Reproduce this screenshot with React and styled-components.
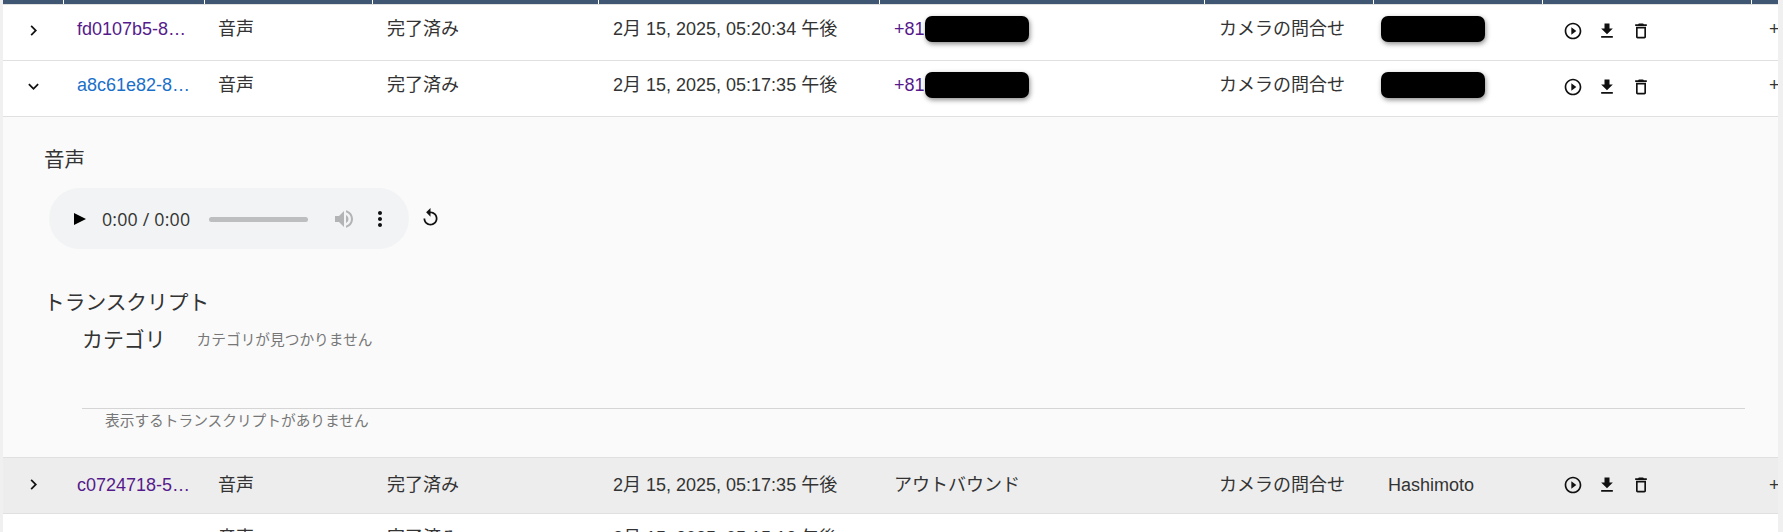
import React from "react";
import styled, { createGlobalStyle } from "styled-components";

const Global = createGlobalStyle`
  html, body { margin: 0; padding: 0; height: 532px; overflow: hidden; background: #f0f0f0; }
  #root { height: 532px; }
`;

const COLS = "61px 141px 168px 226px 281px 325px 169px 169px 209px 26px";
const FONT = `"Liberation Sans", "Noto Sans CJK JP", sans-serif`;

const Page = styled.div`
  height: 532px;
  overflow: hidden;
  padding: 0 5px 0 3px;
  font-family: ${FONT};
  color: #333;
`;
const Sheet = styled.div`
  background: #fff;
  overflow: hidden;
  height: 532px;
`;
const HeaderBar = styled.div`
  display: grid;
  grid-template-columns: ${COLS};
  height: 4px;
  background: #3f5773;
  border-bottom: 1px solid #e0e0e0;
`;
const HeaderCell = styled.div`
  border-right: 1px solid #fff;
  &:last-child { border-right: 0; }
`;
const Row = styled.div`
  display: grid;
  grid-template-columns: ${COLS};
  box-sizing: border-box;
  height: 56px;
  padding-top: ${(p) => (p.$hover ? "2px" : "0")};
  border-bottom: 1px solid #e0e0e0;
  background: ${(p) => (p.$hover ? "#ededed" : "#fff")};
`;
const Cell = styled.div`
  display: flex;
  align-items: flex-start;
  padding: ${(p) => (p.$hover ? "14px" : "13px")} 0 0 ${(p) => p.$inset || 14}px;
  font-size: 18px;
  line-height: 23px;
  white-space: nowrap;
  overflow: hidden;
  min-width: 0;
`;
const ArrowCell = styled.div`
  display: flex;
  align-items: center;
  justify-content: center;
  padding-bottom: 4px;
  padding-right: 1px;
  color: #111;
`;
const IdLink = styled.span`
  color: ${(p) => (p.$active ? "#1a6fc9" : "#551a8b")};
`;
const PhonePrefix = styled.span`
  color: #551a8b;
`;
const Redact = styled.span`
  display: block;
  width: 104px;
  height: 26px;
  margin-top: -2px;
  background: #000;
  border-radius: 7px;
  box-shadow: 1px 2px 5px rgba(0, 0, 0, 0.45);
  flex: none;
`;
const PhoneRedact = styled(Redact)`
  margin-left: 0;
`;
const AgentRedact = styled(Redact)`
  margin-left: -7px;
`;
const ActionCell = styled.div`
  display: flex;
  align-items: center;
  gap: 14px;
  padding: 0 0 4px 20px;
  color: #111;
`;
const Icon = styled.svg`
  width: ${(p) => p.$size || 20}px;
  height: ${(p) => p.$size || 20}px;
  fill: currentColor;
  flex: none;
  display: block;
`;

const Panel = styled.div`
  box-sizing: border-box;
  height: 341px;
  background: #fafafa;
  border-bottom: 1px solid #e0e0e0;
  padding: 29px 33px 0 41px;
`;
const Heading = styled.div`
  font-size: 20.5px;
  line-height: 28px;
  color: #333;
`;
const PlayerRow = styled.div`
  display: flex;
  align-items: center;
  gap: 14px;
  margin: 14px 0 0 5px;
`;
const Player = styled.div`
  box-sizing: border-box;
  width: 360px;
  height: 61px;
  border-radius: 31px;
  background: #f1f3f4;
  display: flex;
  align-items: center;
  padding: 0 0 0 25px;
`;
const PlayGlyph = styled.span`
  width: 0;
  height: 0;
  border-style: solid;
  border-width: 6.5px 0 6.5px 12px;
  border-color: transparent transparent transparent #000;
  margin-top: 1px;
`;
const Time = styled.span`
  font-family: "Open Sans", sans-serif;
  font-size: 17.8px;
  letter-spacing: 0.2px;
  color: #333;
  margin-left: 16px;
  width: 107px;
  white-space: nowrap;
`;
const Track = styled.span`
  width: 99px;
  height: 5px;
  border-radius: 3px;
  background: #bdbebf;
  margin-top: 1px;
`;
const Speaker = styled(Icon)`
  color: #b3b4b5;
  margin-left: 24px;
`;
const Dots = styled(Icon)`
  color: #111;
  margin-left: 12px;
`;
const ReplayBtn = styled.span`
  color: #111;
  margin-top: -3px;
  margin-left: -3px;
`;
const TranscriptHeading = styled(Heading)`
  font-size: 20.7px;
  margin-top: 40px;
`;
const CategoryRow = styled.div`
  display: flex;
  align-items: center;
  gap: 31px;
  margin: 8px 0 0 38px;
`;
const CategoryTitle = styled.div`
  font-size: 20.9px;
  line-height: 30px;
  color: #333;
`;
const Muted = styled.div`
  font-size: 14.7px;
  line-height: 20px;
  color: #777;
`;
const Divider = styled.div`
  height: 1px;
  background: #d5d5d5;
  margin: 53px 0 0 38px;
`;
const EmptyNote = styled(Muted)`
  margin: 2px 0 0 61px;
`;

const P = {
  right: "M8.59 16.59 13.17 12 8.59 7.41 10 6l6 6-6 6z",
  down: "M7.41 8.59 12 13.17l4.59-4.58L18 10l-6 6-6-6z",
  play: "M10 16.5l6-4.5-6-4.5v9zM12 2C6.48 2 2 6.48 2 12s4.48 10 10 10 10-4.48 10-10S17.52 2 12 2zm0 18c-4.41 0-8-3.59-8-8s3.59-8 8-8 8 3.59 8 8-3.59 8-8 8z",
  download: "M19 9h-4V3H9v6H5l7 7 7-7zM5 18v2h14v-2H5z",
  trash: "M6 19c0 1.1.9 2 2 2h8c1.1 0 2-.9 2-2V7H6v12zM8 9h8v10H8V9zm7.5-5l-1-1h-5l-1 1H5v2h14V4z",
  replay: "M12 5V1L7 6l5 5V7c3.31 0 6 2.69 6 6s-2.69 6-6 6-6-2.69-6-6H4c0 4.42 3.58 8 8 8s8-3.58 8-8-3.58-8-8-8z",
  speaker: "M3 9v6h4l5 5V4L7 9H3zm13.5 3c0-1.77-1.02-3.29-2.5-4.03v8.05c1.48-.73 2.5-2.25 2.5-4.02zM14 3.23v2.06c2.89.86 5 3.54 5 6.71s-2.11 5.85-5 6.71v2.06c4.01-.91 7-4.49 7-8.77s-2.99-7.86-7-8.77z",
  dots: "M12 8c1.1 0 2-.9 2-2s-.9-2-2-2-2 .9-2 2 .9 2 2 2zm0 2c-1.1 0-2 .9-2 2s.9 2 2 2 2-.9 2-2-.9-2-2-2zm0 6c-1.1 0-2 .9-2 2s.9 2 2 2 2-.9 2-2-.9-2-2-2z",
};

const Glyph = ({ d, size, as: Comp = Icon }) => (
  <Comp viewBox="0 0 24 24" $size={size} aria-hidden="true">
    <path d={d} />
  </Comp>
);

const rows = [
  { id: "fd0107b5-8…", date: "2月 15, 2025, 05:20:34 午後", redacted: true },
  { id: "a8c61e82-8…", date: "2月 15, 2025, 05:17:35 午後", redacted: true, open: true },
  { id: "c0724718-5…", date: "2月 15, 2025, 05:17:35 午後", hover: true },
  { id: "", date: "2月 15, 2025, 05:15:12 午後", plain: true },
];

const TableRow = ({ r }) => (
  <Row $hover={r.hover}>
    <ArrowCell>{!r.plain && <Glyph d={r.open ? P.down : P.right} size={21} />}</ArrowCell>
    <Cell $hover={r.hover} $inset={13}>
      <IdLink $active={r.open}>{r.id}</IdLink>
    </Cell>
    <Cell $hover={r.hover} $inset={13}>音声</Cell>
    <Cell $hover={r.hover}>完了済み</Cell>
    <Cell $hover={r.hover}>{r.date}</Cell>
    <Cell $hover={r.hover}>
      {r.redacted ? (
        <>
          <PhonePrefix>+81</PhonePrefix>
          <PhoneRedact />
        </>
      ) : (
        !r.plain && "アウトバウンド"
      )}
    </Cell>
    <Cell $hover={r.hover}>{!r.plain && "カメラの問合せ"}</Cell>
    <Cell $hover={r.hover}>{r.redacted ? <AgentRedact /> : !r.plain && "Hashimoto"}</Cell>
    {r.plain ? (
      <Cell />
    ) : (
      <ActionCell>
        <Glyph d={P.play} />
        <Glyph d={P.download} />
        <Glyph d={P.trash} />
      </ActionCell>
    )}
    <Cell $hover={r.hover} $inset={17}>{!r.plain && "+"}</Cell>
  </Row>
);

export default function App() {
  return (
    <>
      <Global />
      <Page>
        <Sheet>
          <HeaderBar>
            {Array.from({ length: 10 }, (_, i) => (
              <HeaderCell key={i} />
            ))}
          </HeaderBar>
          <TableRow r={rows[0]} />
          <TableRow r={rows[1]} />
          <Panel>
            <Heading>音声</Heading>
            <PlayerRow>
              <Player>
                <PlayGlyph />
                <Time>0:00 / 0:00</Time>
                <Track />
                <Glyph d={P.speaker} size={24} as={Speaker} />
                <Glyph d={P.dots} size={24} as={Dots} />
              </Player>
              <ReplayBtn>
                <Glyph d={P.replay} size={21} />
              </ReplayBtn>
            </PlayerRow>
            <TranscriptHeading>トランスクリプト</TranscriptHeading>
            <CategoryRow>
              <CategoryTitle>カテゴリ</CategoryTitle>
              <Muted>カテゴリが見つかりません</Muted>
            </CategoryRow>
            <Divider />
            <EmptyNote>表示するトランスクリプトがありません</EmptyNote>
          </Panel>
          <TableRow r={rows[2]} />
          <TableRow r={rows[3]} />
        </Sheet>
      </Page>
    </>
  );
}
